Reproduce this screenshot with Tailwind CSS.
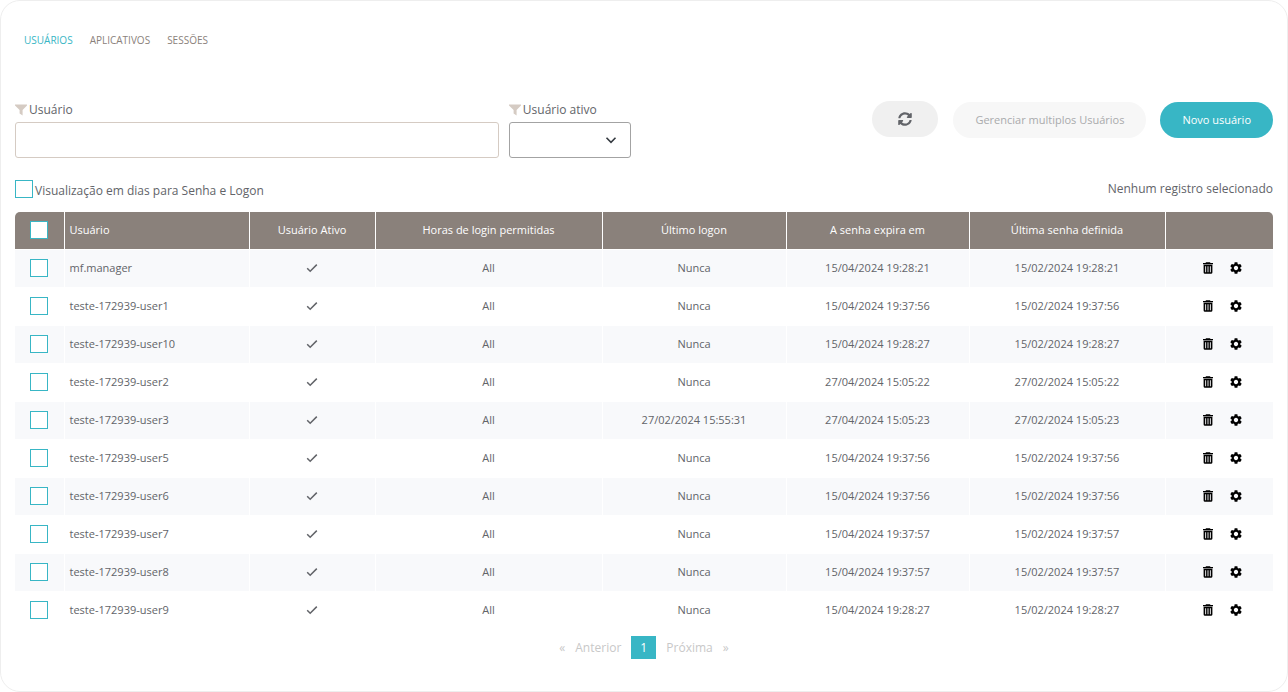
<!DOCTYPE html>
<html lang="pt-BR">
<head>
    <meta charset="UTF-8">
    <meta name="viewport" content="width=device-width, initial-scale=1.0">
    <title>Usuários</title>
    <script src="https://cdn.jsdelivr.net/npm/@tailwindcss/browser@4"></script>
</head>
<body class="bg-white font-['Open_Sans',sans-serif] text-[#626469]">
    <!-- Shared icons -->
    <svg class="hidden">
        <symbol id="icon-filter" viewBox="0 0 12 12"><path d="M0 .6h12v.8L7.6 6v5.4L4.6 9.4V6L0 1.4z" fill="currentColor"/></symbol>
        <symbol id="icon-check" viewBox="0 0 12 12"><path d="M1.2 6.2l3 3 6.6-6.6" fill="none" stroke="currentColor" stroke-width="1.5"/></symbol>
        <symbol id="icon-trash" viewBox="0 0 12 12"><path fill-rule="evenodd" d="M4 .3h4l.5.7H11v1.2H1V1h2.500zM1.600 2.800h8.800v7.600a1.400 1.400 0 0 1-1.400 1.400H3a1.400 1.400 0 0 1-1.400-1.400zM3.200 4.200v6h.9v-6zM5.550 4.200v6h.9v-6zM7.900 4.200v6h.9v-6z" fill="currentColor"/></symbol>
        <symbol id="icon-gear" viewBox="2 2 20 20"><path d="M19.140 12.940c.04-.3.06-.61.06-.94 0-.32-.02-.64-.07-.94l2.030-1.580c.18-.14.23-.41.12-.61l-1.920-3.320c-.12-.22-.37-.29-.59-.22l-2.390.96c-.5-.38-1.030-.7-1.620-.94l-.36-2.540c-.04-.24-.24-.41-.48-.41h-3.840c-.24 0-.43.17-.47.41l-.36 2.540c-.59.24-1.130.57-1.620.94l-2.390-.96c-.22-.08-.47 0-.59.22L2.740 8.870c-.12.21-.08.47.12.61l2.030 1.580c-.05.3-.09.63-.09.94s.02.64.07.94l-2.030 1.580c-.18.14-.23.41-.12.61l1.920 3.320c.12.22.37.29.59.22l2.390-.96c.5.38 1.030.7 1.620.94l.36 2.540c.05.24.24.41.48.41h3.840c.24 0 .44-.17.47-.41l.36-2.540c.59-.24 1.130-.56 1.620-.94l2.390.96c.22.08.47 0 .59-.22l1.920-3.320c.12-.22.07-.47-.12-.61l-2.010-1.580zM12 15.600c-1.980 0-3.600-1.620-3.600-3.600s1.620-3.600 3.600-3.600 3.600 1.620 3.600 3.600-1.620 3.600-3.600 3.600z" fill="currentColor"/></symbol>
    </svg>

    <main class="min-h-screen border border-[#eeeeee] rounded-[20px] px-[14px] pt-[31px] pb-6">
        <nav class="flex gap-[17px] px-[9px] text-[10px] leading-4 text-[#8a817b]">
            <a href="#" class="text-[#38b6c5]">USUÁRIOS</a>
            <a href="#">APLICATIVOS</a>
            <a href="#">SESSÕES</a>
        </nav>

        <div class="flex items-start mt-[53px]">
            <div class="w-5/13">
                <label for="userFilter" class="flex items-center gap-[2px] text-[12px] leading-[18px] mb-[3px]">
                    <svg class="w-3 h-3 text-[#d5cbc3]"><use href="#icon-filter"/></svg>Usuário
                </label>
                <input id="userFilter" type="text" class="block w-full h-9 px-3 text-[12px] border border-[#d5cbc3] rounded-[3px]">
            </div>
            <div class="w-[122px] ml-[10px]">
                <label for="activeFilter" class="flex items-center gap-[2px] text-[12px] leading-[18px] mb-[3px]">
                    <svg class="w-3 h-3 text-[#d5cbc3]"><use href="#icon-filter"/></svg>Usuário ativo
                </label>
                <div class="relative">
                    <select id="activeFilter" class="appearance-none block w-full h-9 px-3 text-[12px] bg-white border border-[#a3a3a3] rounded-[3px]">
                        <option value=""></option>
                        <option>Sim</option>
                        <option>Não</option>
                    </select>
                    <svg class="absolute right-[14px] top-3 w-3 h-3 pointer-events-none" viewBox="0 0 12 12"><path d="M1.500 3.800L6 8.300l4.500-4.500" fill="none" stroke="#343a40" stroke-width="1.600"/></svg>
                </div>
            </div>
            <div class="flex items-start ml-auto text-[11px]">
                <button aria-label="Atualizar" class="flex items-center justify-center w-[66px] h-9 rounded-full bg-[#f0f0f0]">
                    <svg class="w-[14px] h-[14px]" viewBox="0 0 512 512"><path fill="#626469" d="M370.720 133.280C339.458 104.008 298.888 87.962 255.848 88c-77.458.068-144.328 53.178-162.791 126.850-1.344 5.363-6.122 9.150-11.651 9.150H24.103c-7.498 0-13.194-6.807-11.807-14.176C33.933 94.924 134.813 8 256 8c66.448 0 126.791 26.136 171.315 68.685L463.030 40.970C478.149 25.851 504 36.559 504 57.941V192c0 13.255-10.745 24-24 24H345.941c-21.382 0-32.090-25.851-16.971-40.971l41.750-41.749zM32 296h134.059c21.382 0 32.090 25.851 16.971 40.971l-41.750 41.750c31.262 29.273 71.835 45.319 114.876 45.280 77.418-.07 144.315-53.144 162.787-126.849 1.344-5.363 6.122-9.150 11.651-9.150h57.304c7.498 0 13.194 6.807 11.807 14.176C478.067 417.076 377.187 504 256 504c-66.448 0-126.791-26.136-171.315-68.685L48.970 471.030C33.851 486.149 8 475.441 8 454.059V320c0-13.255 10.745-24 24-24z"/></svg>
                </button>
                <div class="flex gap-[14px] pt-px pl-[15px]">
                    <button disabled class="h-9 px-[22px] rounded-full bg-[#f7f7f7] text-[#a9aaac]">Gerenciar multiplos Usuários</button>
                    <button class="h-9 px-[22px] rounded-full bg-[#38b6c5] text-white">Novo usuário</button>
                </div>
            </div>
        </div>

        <div class="flex items-start justify-between mt-[22px] mb-3 text-[12px] leading-[18px]">
            <div class="flex items-start gap-[2px]">
                <input id="daysView" type="checkbox" class="appearance-none w-[18px] h-[18px] bg-white border border-[#38b6c5] checked:bg-[#38b6c5]">
                <label for="daysView" class="pt-[2px]">Visualização em dias para Senha e Logon</label>
            </div>
            <p>Nenhum registro selecionado</p>
        </div>

        <div class="rounded-t-[5px] overflow-hidden">
            <table class="w-full table-fixed text-[11px] leading-4 text-center">
                <colgroup>
                    <col class="w-[49px]">
                    <col class="w-[185px]">
                    <col class="w-[126px]">
                    <col class="w-[227px]">
                    <col class="w-[184px]">
                    <col class="w-[183px]">
                    <col class="w-[196px]">
                    <col class="w-[108px]">
                </colgroup>
                <thead class="bg-[#8a817b] text-white">
                    <tr class="h-[37px] border-b border-white *:font-normal *:border-r *:border-white *:last:border-r-0">
                        <th><input type="checkbox" aria-label="Selecionar todos" class="appearance-none block mx-auto w-[18px] h-[18px] bg-white border border-[#38b6c5] checked:bg-[#38b6c5]"></th>
                        <th class="text-left px-[5px]">Usuário</th>
                        <th>Usuário Ativo</th>
                        <th>Horas de login permitidas</th>
                        <th>Último logon</th>
                        <th>A senha expira em</th>
                        <th>Última senha definida</th>
                        <th></th>
                    </tr>
                </thead>
                <tbody id="userRows"></tbody>
            </table>
        </div>

        <nav aria-label="Paginação" class="flex justify-center items-center gap-[10px] mt-[6px] text-[12px] leading-[23px] text-[#c8c8c8]">
            <a href="#">«</a>
            <a href="#">Anterior</a>
            <a href="#" class="w-[25px] text-center bg-[#38b6c5] text-white">1</a>
            <a href="#">Próxima</a>
            <a href="#">»</a>
        </nav>
    </main>

    <script>
        const users = [
            ['mf.manager', 'Nunca', '15/04/2024 19:28:21', '15/02/2024 19:28:21'],
            ['teste-172939-user1', 'Nunca', '15/04/2024 19:37:56', '15/02/2024 19:37:56'],
            ['teste-172939-user10', 'Nunca', '15/04/2024 19:28:27', '15/02/2024 19:28:27'],
            ['teste-172939-user2', 'Nunca', '27/04/2024 15:05:22', '27/02/2024 15:05:22'],
            ['teste-172939-user3', '27/02/2024 15:55:31', '27/04/2024 15:05:23', '27/02/2024 15:05:23'],
            ['teste-172939-user5', 'Nunca', '15/04/2024 19:37:56', '15/02/2024 19:37:56'],
            ['teste-172939-user6', 'Nunca', '15/04/2024 19:37:56', '15/02/2024 19:37:56'],
            ['teste-172939-user7', 'Nunca', '15/04/2024 19:37:57', '15/02/2024 19:37:57'],
            ['teste-172939-user8', 'Nunca', '15/04/2024 19:37:57', '15/02/2024 19:37:57'],
            ['teste-172939-user9', 'Nunca', '15/04/2024 19:28:27', '15/02/2024 19:28:27']
        ];

        document.getElementById('userRows').innerHTML = users.map(([name, lastLogon, expires, lastSet]) => `
            <tr class="h-[38px] border-b border-white odd:bg-[#f8f9fb] *:border-r *:border-white *:last:border-r-0">
                <td><input type="checkbox" aria-label="Selecionar ${name}" class="appearance-none block mx-auto w-[18px] h-[18px] bg-white border border-[#38b6c5] checked:bg-[#38b6c5]"></td>
                <td class="text-left px-[5px]">${name}</td>
                <td><svg class="w-3 h-3 mx-auto" role="img" aria-label="Ativo"><use href="#icon-check"/></svg></td>
                <td>All</td>
                <td>${lastLogon}</td>
                <td>${expires}</td>
                <td>${lastSet}</td>
                <td>
                    <div class="flex justify-center gap-4 pl-[5px] text-black">
                        <button aria-label="Excluir"><svg class="w-3 h-3"><use href="#icon-trash"/></svg></button>
                        <button aria-label="Configurar"><svg class="w-3 h-3"><use href="#icon-gear"/></svg></button>
                    </div>
                </td>
            </tr>`).join('');
    </script>
</body>
</html>
